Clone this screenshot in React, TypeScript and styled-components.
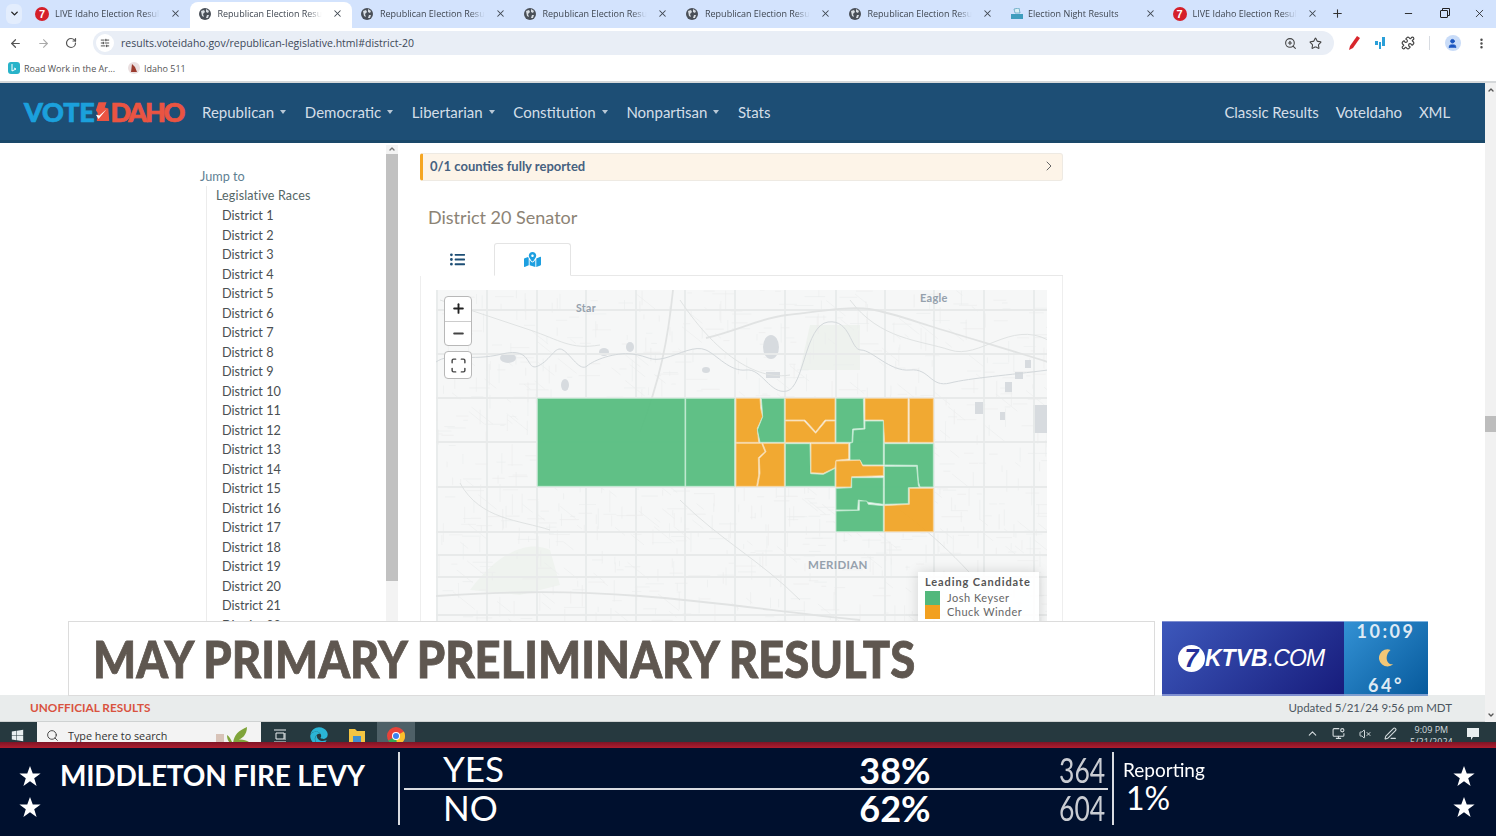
import styled, { createGlobalStyle } from 'styled-components'
import {
  ArrowLeft, ArrowRight, ChevronDown, ChevronRight, ChevronUp, Maximize, Minus, MoreVertical,
  PenLine, Plus, Puzzle, RotateCw, Search, SlidersHorizontal, Star, User, VolumeX, X, ZoomIn, MonitorDot,
} from 'lucide-react'
import { FaEdge, FaListUl, FaMapMarkedAlt, FaWindows } from 'react-icons/fa'

const GlobalStyle = createGlobalStyle`
  html, body { margin: 0; padding: 0; background: #fff; }
  * { box-sizing: border-box; }
  body { font-family: "Lato", "Open Sans", sans-serif; }
`

const tabs = [
  { icon: 'seven', title: 'LIVE Idaho Election Results' },
  { icon: 'globe', title: 'Republican Election Results', active: true },
  { icon: 'globe', title: 'Republican Election Results' },
  { icon: 'globe', title: 'Republican Election Results' },
  { icon: 'globe', title: 'Republican Election Results' },
  { icon: 'globe', title: 'Republican Election Results' },
  { icon: 'ballot', title: 'Election Night Results' },
  { icon: 'seven', title: 'LIVE Idaho Election Results' },
]

const parties = ['Republican', 'Democratic', 'Libertarian', 'Constitution', 'Nonpartisan']
const districts = Array.from({ length: 22 }, (_, i) => `District ${i + 1}`)

// precinct shapes traced from the map, coords are 3x from the (520,385) corner
const precincts: { fill: 'green' | 'orange'; points: string }[] = [
  { fill: 'green', points: '52,40 495,40 495,304 52,304' },
  { fill: 'green', points: '497,40 644,40 644,304 497,304' },
  { fill: 'orange', points: '648,40 720,40 722,70 728,95 712,130 716,172 648,172' },
  { fill: 'green', points: '724,40 793,40 793,172 720,172 712,135 728,95' },
  { fill: 'orange', points: '648,175 725,175 735,200 715,218 716,270 710,304 648,304' },
  { fill: 'orange', points: '728,175 793,175 793,304 713,304 720,265 718,220 738,200' },
  { fill: 'orange', points: '796,40 945,40 945,105 915,105 887,140 855,105 796,105' },
  { fill: 'orange', points: '796,108 852,108 887,145 918,108 945,108 945,172 796,172' },
  { fill: 'green', points: '948,40 1030,40 1032,130 998,132 996,172 948,172' },
  { fill: 'orange', points: '1035,40 1164,40 1164,172 1094,172 1090,105 1035,105' },
  { fill: 'orange', points: '1168,40 1240,40 1240,172 1168,172' },
  { fill: 'green', points: '1035,108 1090,108 1090,240 1028,240 1020,225 990,225 990,175 998,172 1000,135 1035,132' },
  { fill: 'green', points: '796,176 870,176 872,266 910,268 945,250 945,304 796,304' },
  { fill: 'orange', points: '873,176 986,176 986,222 948,226 945,248 910,265 873,263' },
  { fill: 'orange', points: '948,228 1020,226 1028,243 1090,243 1090,272 995,275 993,306 948,306' },
  { fill: 'green', points: '1093,176 1240,176 1240,306 1200,306 1195,290 1192,241 1093,240' },
  { fill: 'green', points: '1093,244 1190,244 1195,300 1198,307 1165,308 1165,356 1093,358' },
  { fill: 'green', points: '995,278 1090,278 1090,358 1045,352 1015,345 1013,375 948,375 948,310 995,308' },
  { fill: 'green', points: '948,378 1018,376 1018,348 1040,348 1045,358 1090,362 1090,440 948,440' },
  { fill: 'orange', points: '1093,362 1168,358 1168,310 1240,310 1240,440 1093,440' },
]

const gridX = [437, 487, 537, 586, 636, 685, 735, 785, 836, 885, 934, 984, 1034]
const gridY = [310, 354, 398, 442, 487, 532, 555, 577, 615]

// small neighbourhood streets, fixed seed so the map never changes
const streets = (() => {
  let seed = 20
  const next = () => {
    seed = (seed * 9301 + 49297) % 233280
    return seed / 233280
  }
  const out: string[] = []
  for (let i = 0; i < 1000; i++) {
    const x = 436 + next() * 612
    const y = 290 + next() * 340
    const len = 4 + next() * 18
    const dir = next()
    if (dir < 0.4) out.push(`M${x} ${y}h${len}`)
    else if (dir < 0.8) out.push(`M${x} ${y}v${len}`)
    else out.push(`M${x} ${y}l${len} ${len * 0.8}`)
  }
  return out.join('')
})()

const Frame = styled.div`
  position: relative;
  width: 1496px;
  height: 836px;
  overflow: hidden;
  display: flex;
  flex-direction: column;
  background: #fff;
`

const TabStrip = styled.div`
  height: 28px;
  background: #d3e3fd;
  display: flex;
  align-items: center;
  padding: 0 0 1px 6px;
`

const TabMenu = styled.div`
  width: 16px;
  height: 20px;
  margin-right: 5px;
  border-radius: 6px;
  background: #e3edfd;
  display: flex;
  align-items: center;
  justify-content: center;
  color: #222;
`

const Tab = styled.div<{ $active?: boolean }>`
  width: 162.5px;
  height: 26px;
  align-self: flex-end;
  margin-bottom: -1px;
  padding: 0 9px 3px 8px;
  display: flex;
  align-items: center;
  gap: 6px;
  border-radius: 8px 8px 0 0;
  background: ${p => (p.$active ? '#fff' : 'transparent')};
  font-family: "Open Sans", sans-serif;
  font-size: 9px;
  color: #3f4650;
`

const TabTitle = styled.span`
  flex: 1;
  white-space: nowrap;
  overflow: hidden;
  mask-image: linear-gradient(to right, #000 82%, transparent 96%);
`

const NewTab = styled.div`
  margin-left: 4px;
  color: #333;
  display: flex;
`

const WindowButtons = styled.div`
  margin-left: auto;
  width: 93px;
  padding-right: 10px;
  display: flex;
  align-items: center;
  justify-content: space-between;
  color: #222;
`

const SevenBadge = styled.span`
  width: 14px;
  height: 14px;
  flex: none;
  border-radius: 50%;
  background: #d5202a;
  color: #fff;
  font: bold 11px/14px "Liberation Sans", sans-serif;
  text-align: center;
`

const RestoreIcon = styled.span`
  width: 8px;
  height: 8px;
  border: 1px solid #222;
  border-radius: 1px;
  box-shadow: 2px -2px 0 -1px #d3e3fd, 2px -2px 0 0 #222;
`

const Toolbar = styled.div`
  height: 30px;
  background: #fff;
  display: flex;
  align-items: center;
  padding-left: 9px;
  color: #555;
`

const NavIcons = styled.div`
  width: 84px;
  display: flex;
  align-items: center;
  gap: 15px;
`

const Omnibox = styled.div`
  width: 1241px;
  height: 24px;
  border-radius: 12px;
  background: #e9eef6;
  display: flex;
  align-items: center;
  padding: 0 12px 0 3px;
  font-family: "Open Sans", sans-serif;
  font-size: 10.5px;
  color: #3c4858;
`

const TuneChip = styled.span`
  width: 18px;
  height: 18px;
  margin-right: 7px;
  border-radius: 50%;
  background: #fff;
  display: flex;
  align-items: center;
  justify-content: center;
  color: #333;
`

const OmniEnd = styled.div`
  margin-left: auto;
  display: flex;
  align-items: center;
  gap: 12px;
  color: #444;
`

const Extensions = styled.div`
  flex: 1;
  display: flex;
  align-items: center;
  justify-content: space-between;
  padding: 0 8px 0 14px;
  color: #444;
`

const ProfileDot = styled.span`
  width: 16px;
  height: 16px;
  border-radius: 50%;
  background: #c9dcf8;
  color: #1a55c0;
  display: flex;
  align-items: center;
  justify-content: center;
`

const ToolDivider = styled.span`
  width: 1px;
  height: 14px;
  background: #d8dce2;
`

const Bookmarks = styled.div`
  height: 25px;
  padding: 0 0 3px 8px;
  display: flex;
  align-items: center;
  gap: 13px;
  background: #fff;
  border-bottom: 2px solid #d5d8da;
  font-family: "Open Sans", sans-serif;
  font-size: 9px;
  color: #555;
`

const Bookmark = styled.span`
  display: flex;
  align-items: center;
  gap: 4px;
`

const Viewport = styled.div`
  height: 639px;
  display: flex;
`

const Page = styled.div`
  width: 1485px;
  display: flex;
  flex-direction: column;
`

const SiteHeader = styled.header`
  height: 60px;
  flex: none;
  padding: 0 35px 0 24px;
  display: flex;
  align-items: center;
  background: #1d4e75;
  border-bottom: 3px solid #1a4869;
`

const Logo = styled.div`
  width: 162px;
  margin-right: 16px;
  display: flex;
  align-items: center;
  font-family: "Lato", sans-serif;
  font-weight: 900;
  font-size: 27px;
  line-height: 27px;
  -webkit-text-stroke: 0.7px currentColor;
`

const LogoVote = styled.span`
  color: #1ba0dc;
  letter-spacing: -0.2px;
`

const LogoIdaho = styled.span`
  color: #ea5442;
  letter-spacing: -2.3px;
`

const NavLink = styled.a`
  display: flex;
  align-items: center;
  color: #d4dee8;
  font-size: 15px;
  margin-right: 18.7px;
`

const Caret = styled.span`
  margin-left: 6px;
  width: 0;
  height: 0;
  border: 3.5px solid transparent;
  border-top: 4px solid #b9c8d6;
  border-bottom: 0;
`

const HeaderEnd = styled.div`
  margin-left: auto;
  display: flex;
  letter-spacing: -0.1px;
  & > a { margin-right: 17px; }
  & > a:last-child { margin-right: 0; }
`

const Content = styled.div`
  flex: 1;
  min-height: 0;
  display: flex;
  overflow: hidden;
  background: #fff;
`

const Sidebar = styled.aside`
  width: 398px;
  flex: none;
  display: flex;
`

const JumpList = styled.div`
  flex: 1;
  padding: 24px 0 0 200px;
  overflow: hidden;
  line-height: 19.5px;
  font-size: 12.7px;
`

const JumpTitle = styled.div`
  color: #5f7f93;
`

const JumpGroup = styled.div`
  margin-left: 6px;
  border-left: 1px solid #ececec;
`

const GroupName = styled.div`
  padding-left: 9px;
  color: #566;
  font-size: 12.5px;
  letter-spacing: 0.15px;
  margin-top: -1px;
  margin-bottom: 1px;
`

const DistrictItem = styled.div`
  padding-left: 15px;
  color: #4a4f52;
`

const SideScroll = styled.div`
  width: 12px;
  margin-top: 2px;
  background: #f3f3f3;
  display: flex;
  flex-direction: column;
  align-items: center;
  color: #777;
`

const SideThumb = styled.div`
  width: 12px;
  height: 427px;
  margin-top: 1px;
  background: #c1c1c1;
`

const Main = styled.main`
  width: 643px;
  margin-left: 22px;
  padding-top: 10px;
`

const Alert = styled.div`
  height: 28px;
  padding: 0 5px 2px 7px;
  display: flex;
  align-items: center;
  justify-content: space-between;
  background: #fdf4e8;
  border: 1px solid #eeeae3;
  border-left: 3px solid #f5a623;
  border-radius: 3px;
  font-size: 13px;
  font-weight: 700;
  color: #466180;
`

const RaceTitle = styled.h2`
  margin: 25px 0 15px 8px;
  height: 22px;
  font-size: 18px;
  line-height: 22px;
  font-weight: 400;
  color: #8c8375;
`

const ViewTabs = styled.div`
  display: flex;
  height: 33px;
  border-bottom: 1px solid #e8e8e8;
`

const ViewTab = styled.div<{ $active?: boolean }>`
  height: 33px;
  width: ${p => (p.$active ? '77px' : '74px')};
  display: flex;
  align-items: center;
  justify-content: center;
  border: 1px solid ${p => (p.$active ? '#e4e4e4' : 'transparent')};
  border-bottom: 1px solid ${p => (p.$active ? '#fff' : 'transparent')};
  border-radius: 3px 3px 0 0;
  background: #fff;
  color: ${p => (p.$active ? '#1d9fe0' : '#1d4e75')};
`

const MapCard = styled.div`
  padding: 14px 15px;
  border: 1px solid #eeeeee;
  border-top: 0;
`

const MapBox = styled.div`
  position: relative;
  height: 340px;
  background: #f5f6f6;
  overflow: hidden;
`

const MapCanvas = styled.svg`
  display: block;
`

const MapLabel = styled.text`
  font-family: "Lato", sans-serif;
  font-weight: 700;
  fill: #95a1ad;
  letter-spacing: 0.3px;
`

const ZoomControl = styled.div`
  position: absolute;
  left: 8px;
  top: 6px;
  width: 28px;
  height: 50px;
  display: flex;
  flex-direction: column;
  background: #fff;
  border: 1px solid #b8b8b8;
  border-radius: 4px;
  color: #222;
`

const ZoomButton = styled.div`
  flex: 1;
  display: flex;
  align-items: center;
  justify-content: center;
  & + & { border-top: 1px solid #ccc; }
`

const FullscreenControl = styled.div`
  position: absolute;
  left: 8px;
  top: 61px;
  width: 28px;
  height: 28px;
  display: flex;
  align-items: center;
  justify-content: center;
  background: #fff;
  border: 1px solid #b8b8b8;
  border-radius: 4px;
  color: #444;
`

const Legend = styled.div`
  position: absolute;
  left: 482px;
  top: 282px;
  width: 121px;
  height: 60px;
  padding: 3px 7px;
  background: rgba(255, 255, 255, 0.9);
  box-shadow: 0 0 12px rgba(0, 0, 0, 0.15);
  font-size: 11px;
  line-height: 14px;
  color: #666;
`

const LegendTitle = styled.div`
  font-weight: 700;
  color: #555;
  margin-bottom: 2px;
  letter-spacing: 0.9px;
  white-space: nowrap;
`

const LegendRow = styled.div`
  display: flex;
  align-items: center;
  gap: 7px;
  letter-spacing: 0.5px;
`

const Swatch = styled.span<{ $color: string }>`
  width: 15px;
  height: 14px;
  background: ${p => p.$color};
`

const PageFooter = styled.footer`
  height: 27px;
  flex: none;
  padding: 0 33px 2px 30px;
  display: flex;
  align-items: center;
  justify-content: space-between;
  background: #e9ecec;
  border-bottom: 1px solid #cfd2d2;
  font-size: 11.5px;
  color: #4c5660;
`

const Unofficial = styled.span`
  color: #d9533f;
  font-weight: 700;
  font-size: 11.8px;
`

const PageScroll = styled.div`
  width: 11px;
  display: flex;
  flex-direction: column;
  align-items: center;
  justify-content: space-between;
  position: relative;
  background: #f1f1f1;
  color: #555;
  padding: 3px 0;
`

const PageThumb = styled.div`
  position: absolute;
  top: 333px;
  width: 11px;
  height: 16px;
  background: #bdbdbd;
`

const Taskbar = styled.div`
  height: 20px;
  flex: none;
  overflow: hidden;
  display: flex;
  background: #26393f;
  color: #e8eef0;
`

const StartButton = styled.div`
  width: 37px;
  display: flex;
  align-items: center;
  justify-content: center;
  padding: 7px 2px 0 0;
`

const TaskSearch = styled.div`
  width: 224px;
  height: 24px;
  padding: 2px 10px 0 9px;
  display: flex;
  align-items: center;
  gap: 9px;
  background: #f3f3f3;
  color: #333;
  font: 10.8px "Open Sans", sans-serif;
`

const SearchArt = styled.span`
  margin-left: auto;
  display: flex;
  color: #6d9a2c;
`

const TaskApp = styled.div<{ $open?: boolean }>`
  width: 38.5px;
  display: flex;
  align-items: center;
  justify-content: center;
  padding-top: 7px;
  background: ${p => (p.$open ? '#4e6067' : 'transparent')};
`

const Tray = styled.div`
  margin-left: auto;
  width: 190px;
  padding: 3px 16px 0 0;
  display: flex;
  align-items: center;
  justify-content: space-between;
  color: #d5dcdf;
`

const Clock = styled.div`
  font: 9px/12px "Open Sans", sans-serif;
  text-align: center;
  padding-top: 5px;
`

const RedRule = styled.div`
  height: 6px;
  flex: none;
  background: linear-gradient(to bottom, #7c1526, #b01c2e);
`

const Ticker = styled.div`
  flex: 1;
  display: flex;
  background: #00102e;
  color: #fff;
  padding-top: 4px;
`

const StarColumn = styled.div<{ $width: number }>`
  width: ${p => p.$width}px;
  height: 73px;
  flex: none;
  padding-top: 13px;
  display: flex;
  flex-direction: column;
  align-items: center;
  gap: 9px;
`

const RaceName = styled.div`
  width: 338px;
  flex: none;
  padding-top: 8px;
  font-weight: 700;
  font-size: 28px;
  line-height: 30px;
  letter-spacing: -0.2px;
`

const Results = styled.div`
  width: 716px;
  height: 73px;
  flex: none;
  padding: 0 4px;
  border-left: 2px solid #d8dbe0;
  border-right: 2px solid #d8dbe0;
`

const ResultRow = styled.div`
  height: 35.5px;
  display: grid;
  grid-template-columns: 407px 90px 1fr;
  align-items: center;
  padding: 0 3px 0 39px;
  & + & {
    height: 39px;
    border-top: 2px solid #d8dbe0;
  }
`

const Choice = styled.span`
  margin-top: -3px;
  font-size: 35px;
  line-height: 34px;
  font-weight: 400;
`

const Percent = styled.span`
  text-align: center;
  font-size: 36px;
  line-height: 34px;
  font-weight: 700;
`

const VoteCount = styled.span`
  justify-self: end;
  font-size: 34px;
  line-height: 34px;
  color: #c9ccd2;
  transform-origin: right;
  transform: scaleX(0.78);
`

const Reporting = styled.div`
  flex: 1;
  padding: 5px 0 0 9px;
`

const ReportingLabel = styled.div`
  font-size: 20px;
  line-height: 24px;
  transform-origin: left;
  transform: scaleX(0.95);
`

const ReportingValue = styled.div`
  font-size: 32px;
  line-height: 34px;
  padding-left: 3px;
`

const LowerThird = styled.div`
  position: absolute;
  left: 68px;
  top: 621px;
  width: 1360px;
  height: 75px;
  display: flex;
  gap: 7px;
`

const Headline = styled.div`
  width: 1087px;
  padding-left: 24px;
  display: flex;
  align-items: center;
  background: #fff;
  border: 1px solid #dcdcdc;
  overflow: hidden;
`

const HeadlineText = styled.span`
  font-weight: 900;
  font-size: 51px;
  line-height: 60px;
  -webkit-text-stroke: 0.8px #5f5750;
  color: #5f5750;
  white-space: nowrap;
  transform-origin: left;
  transform: scaleX(0.89);
`

const StationBug = styled.div`
  flex: 1;
  display: flex;
`

const StationBrand = styled.div`
  width: 182px;
  padding-left: 16px;
  display: flex;
  align-items: center;
  background: linear-gradient(135deg, #3d58bb, #171c7c);
  border-top: 1px solid #7f8fd0;
  border-bottom: 2px solid #7f8fd0;
  font-family: "Liberation Sans", sans-serif;
  font-style: italic;
  color: #fff;
`

const BrandSeven = styled.span`
  width: 27px;
  height: 27px;
  border-radius: 50%;
  background: #fff;
  color: #26309a;
  font-weight: 700;
  font-size: 25px;
  line-height: 27px;
  text-align: center;
`

const BrandName = styled.span`
  font-weight: 700;
  font-size: 23px;
`

const BrandDomain = styled.span`
  font-size: 23px;
  letter-spacing: -0.8px;
`

const WeatherPanel = styled.div`
  flex: 1;
  display: flex;
  flex-direction: column;
  align-items: center;
  justify-content: space-between;
  background: linear-gradient(135deg, #3391d4, #075a9c);
  border-top: 1px solid #7fb4e0;
  border-bottom: 2px solid #7f9fd0;
  font-family: "Lato", sans-serif;
  font-weight: 700;
  font-size: 18px;
  line-height: 18px;
  letter-spacing: 2.5px;
  color: #dfeaf4;
`

const Globe = () => (
  <svg width="14" height="12" viewBox="0 0 14 12" style={{ flex: 'none' }}>
    <circle cx="7" cy="6" r="6" fill="#4a5058" />
    <path d="M3 3l3-1 1 2-2 2 1 3-2-1zM8 1l3 2-1 2-2-1zM9 7l2 0-1 3-2 0z" fill="#d8dde2" />
  </svg>
)

const Ballot = () => (
  <svg width="14" height="12" viewBox="0 0 14 12" style={{ flex: 'none', marginRight: -2 }}>
    <path d="M4 1l5-1 1 5H5z" fill="#d9f0f5" stroke="#3c8fae" strokeWidth=".6" />
    <path d="M1 6h12v5H1z" fill="#3f9dbd" />
  </svg>
)

const TabIcon = ({ kind }: { kind: string }) => {
  if (kind === 'seven') return <SevenBadge>7</SevenBadge>
  if (kind === 'ballot') return <Ballot />
  return <Globe />
}

const TickerStar = () => (
  <svg width="22" height="22" viewBox="0 0 24 24">
    <path d="M12 1l3 8.200h8.600l-7 5.200 2.600 8.400L12 17.600l-7.200 5.200 2.600-8.400-7-5.200H9z" fill="#fff" />
  </svg>
)

const MapBackdrop = () => (
  <>
    <rect x="436" y="290" width="612" height="340" fill="#f6f7f7" />
    <path d="M810 325h50v45h-60z" fill="#eef2ee" />
    <path d="M470 590c30-40 60-50 80-40l10 35-40 10z" fill="#eff3ef" />
    <path d={streets} stroke="#ebecec" strokeWidth=".6" fill="none" />
    <g fill="#d7dbdf">
      <ellipse cx="771" cy="347" rx="8" ry="12" />
      <rect x="766" y="372" width="14" height="6" />
      <ellipse cx="508" cy="358" rx="8" ry="5" />
      <ellipse cx="565" cy="385" rx="4" ry="6" />
      <ellipse cx="604" cy="352" rx="5" ry="4" />
      <ellipse cx="630" cy="347" rx="4" ry="5" />
      <ellipse cx="706" cy="370" rx="4" ry="3" />
      <rect x="1033" y="405" width="14" height="28" />
      <rect x="975" y="402" width="8" height="12" />
      <rect x="1005" y="382" width="7" height="10" />
      <rect x="1015" y="372" width="8" height="7" />
      <rect x="1000" y="412" width="5" height="8" />
      <rect x="1025" y="360" width="6" height="8" />
    </g>
    <g strokeWidth="1.8" fill="none">
      {gridX.map(x => <path key={x} d={`M${x} 290V630`} stroke="#e8eaea" />)}
      {gridY.map(y => <path key={y} d={`M436 ${y}H1048`} stroke="#e8eaea" />)}
      <path d="M706 338C740 330 760 318 787 315S850 306 869 309 905 318 930 326 1010 350 1048 362" stroke="#e1e3e3" />
      <path d="M673 290C668 340 660 380 640 432" stroke="#e1e3e3" />
      <path d="M436 596C500 592 560 590 640 596S780 612 860 620" stroke="#e1e3e3" />
    </g>
    <path
      d="M436 362C450 352 470 362 502 354S525 372 538 366 555 345 563 350 580 372 587 366 615 352 632 354 650 362 665 358 695 345 706 350 730 372 746 370 770 395 787 391 805 325 828 322 850 350 861 350 890 372 910 370 930 388 950 383 1010 375 1048 370"
      stroke="#d3d8db"
      strokeWidth="1"
      fill="none"
    />
    <path
      d="M440 300C470 310 500 320 530 330S570 350 600 345M680 300C720 360 760 380 790 375M850 300C880 340 920 340 950 350S1010 320 1048 340M460 483C480 520 520 520 550 530M680 500C720 540 760 560 800 600M900 510C940 540 970 570 1010 620"
      stroke="#e0e3e3"
      strokeWidth="1"
      fill="none"
    />
  </>
)

const ElectionMap = () => (
  <MapCanvas width="612" height="340" viewBox="436 290 612 340">
    <MapBackdrop />
    <g transform="translate(520 385) scale(.33333)">
      {precincts.map(p => (
        <polygon
          key={p.points}
          points={p.points}
          fill={p.fill === 'green' ? '#5abd81' : '#f0a62a'}
          fillOpacity=".96"
          stroke={p.fill === 'green' ? '#c4ecd4' : '#f9d9a4'}
          strokeWidth="2.5"
        />
      ))}
    </g>
    <MapLabel x="576" y="312" fontSize="10.5">Star</MapLabel>
    <MapLabel x="920" y="302" fontSize="11">Eagle</MapLabel>
    <MapLabel x="808" y="569" fontSize="11.5">MERIDIAN</MapLabel>
  </MapCanvas>
)

const App = () => (
  <Frame>
    <GlobalStyle />
    <TabStrip>
      <TabMenu><ChevronDown size={11} strokeWidth={3} /></TabMenu>
      {tabs.map((t, i) => (
        <Tab key={i} $active={t.active}>
          <TabIcon kind={t.icon} />
          <TabTitle>{t.title}</TabTitle>
          <X size={11} strokeWidth={2.2} />
        </Tab>
      ))}
      <NewTab><Plus size={13} strokeWidth={2} /></NewTab>
      <WindowButtons>
        <Minus size={11} />
        <RestoreIcon />
        <X size={13} strokeWidth={1.5} />
      </WindowButtons>
    </TabStrip>

    <Toolbar>
      <NavIcons>
        <ArrowLeft size={13} strokeWidth={2.2} />
        <ArrowRight size={13} strokeWidth={2} color="#aaa" />
        <RotateCw size={12} strokeWidth={2.4} />
      </NavIcons>
      <Omnibox>
        <TuneChip><SlidersHorizontal size={10} /></TuneChip>
        results.voteidaho.gov/republican-legislative.html#district-20
        <OmniEnd>
          <ZoomIn size={13} />
          <Star size={13} strokeWidth={2} />
        </OmniEnd>
      </Omnibox>
      <Extensions>
        <svg width="12" height="14" viewBox="0 0 12 14">
          <path d="M9 0l3 2-7 10-4 2 1-4z" fill="#d8262c" />
        </svg>
        <svg width="12" height="14" viewBox="0 0 12 14">
          <path d="M1 5h3v4H1zM5 6h2v7H5zM8 1h3v9H8z" fill="#2a9fd8" />
        </svg>
        <Puzzle size={14} />
        <ToolDivider />
        <ProfileDot><User size={11} fill="#1a55c0" /></ProfileDot>
        <MoreVertical size={13} strokeWidth={2.5} />
      </Extensions>
    </Toolbar>

    <Bookmarks>
      <Bookmark>
        <svg width="12" height="12" viewBox="0 0 12 12">
          <rect width="12" height="12" rx="3" fill="#28b3c9" />
          <path d="M4 2v7l4-2-2-1" stroke="#fff" fill="none" />
        </svg>
        Road Work in the Ar...
      </Bookmark>
      <Bookmark>
        <svg width="12" height="12" viewBox="0 0 12 12">
          <circle cx="6" cy="6" r="6" fill="#eadfe0" />
          <path d="M4 2l3 3 2 5H3z" fill="#9b3b2e" />
        </svg>
        Idaho 511
      </Bookmark>
    </Bookmarks>

    <Viewport>
      <Page>
        <SiteHeader>
          <Logo>
            <LogoVote>VOTE</LogoVote>
            <svg width="16" height="22" viewBox="0 0 18 22" style={{ flex: 'none' }}>
              <path d="M4 0h9l-2 6 4 1 1 14H2l1-9-2-3z" fill="#ea5442" />
              <path d="M1 14l3 5 9-11-8 7z" fill="#fff" />
            </svg>
            <LogoIdaho>DAHO</LogoIdaho>
          </Logo>
          {parties.map(name => (
            <NavLink key={name}>{name}<Caret /></NavLink>
          ))}
          <NavLink>Stats</NavLink>
          <HeaderEnd>
            <NavLink>Classic Results</NavLink>
            <NavLink>VoteIdaho</NavLink>
            <NavLink>XML</NavLink>
          </HeaderEnd>
        </SiteHeader>

        <Content>
          <Sidebar>
            <JumpList>
              <JumpTitle>Jump to</JumpTitle>
              <JumpGroup>
                <GroupName>Legislative Races</GroupName>
                {districts.map(d => <DistrictItem key={d}>{d}</DistrictItem>)}
              </JumpGroup>
            </JumpList>
            <SideScroll>
              <ChevronUp size={8} strokeWidth={4} />
              <SideThumb />
            </SideScroll>
          </Sidebar>

          <Main>
            <Alert>
              0/1 counties fully reported
              <ChevronRight size={16} color="#666" strokeWidth={1.5} />
            </Alert>
            <RaceTitle>District 20 Senator</RaceTitle>
            <ViewTabs>
              <ViewTab><FaListUl size={15} /></ViewTab>
              <ViewTab $active><FaMapMarkedAlt size={17} /></ViewTab>
            </ViewTabs>
            <MapCard>
              <MapBox>
                <ElectionMap />
                <ZoomControl>
                  <ZoomButton><Plus size={15} strokeWidth={3} /></ZoomButton>
                  <ZoomButton><Minus size={15} strokeWidth={3} color="#444" /></ZoomButton>
                </ZoomControl>
                <FullscreenControl><Maximize size={17} strokeWidth={2} /></FullscreenControl>
                <Legend>
                  <LegendTitle>Leading Candidate</LegendTitle>
                  <LegendRow><Swatch $color="#52b87c" />Josh Keyser</LegendRow>
                  <LegendRow><Swatch $color="#f2a01f" />Chuck Winder</LegendRow>
                </Legend>
              </MapBox>
            </MapCard>
          </Main>
        </Content>

        <PageFooter>
          <Unofficial>UNOFFICIAL RESULTS</Unofficial>
          <span>Updated 5/21/24 9:56 pm MDT</span>
        </PageFooter>
      </Page>
      <PageScroll>
        <ChevronUp size={8} strokeWidth={4} />
        <PageThumb />
        <ChevronDown size={8} strokeWidth={4} />
      </PageScroll>
    </Viewport>

    <Taskbar>
      <StartButton><FaWindows size={13} /></StartButton>
      <TaskSearch>
        <Search size={13} strokeWidth={1.6} />
        Type here to search
        <SearchArt>
          <svg width="36" height="20" viewBox="0 0 36 20">
            <rect x="1" y="9" width="8" height="11" fill="#d8c3b8" />
            <path d="M18 20C18 12 22 6 32 2c0 8-5 12-10 13 4-1 9 0 12 2-5 2-10 2-14 3zM18 20c-1-4-3-8-6-10 0 5 2 8 6 10z" fill="#7fa43a" />
          </svg>
        </SearchArt>
      </TaskSearch>
      <TaskApp>
        <svg width="14" height="14" viewBox="0 0 14 14">
          <path d="M1 1h12M1 13h12M3 4h8v6H3zM12 4v7" stroke="#e8eef0" strokeWidth="1" fill="none" />
        </svg>
      </TaskApp>
      <TaskApp><FaEdge size={18} color="#2bb5d6" /></TaskApp>
      <TaskApp>
        <svg width="18" height="15" viewBox="0 0 18 15">
          <path d="M1 1h6l2 2h8v12H1z" fill="#f4c542" />
          <rect x="5" y="8" width="8" height="7" fill="#3f8fd0" />
        </svg>
      </TaskApp>
      <TaskApp $open>
        <svg width="18" height="18" viewBox="0 0 18 18">
          <circle cx="9" cy="9" r="9" fill="#e8433a" />
          <path d="M9 9L1.200 13.500A9 9 0 0 0 13 17z" fill="#34a853" />
          <path d="M9 9l7.800 -4.500A9 9 0 0 1 10 18z" fill="#fbc02d" />
          <circle cx="9" cy="9" r="4" fill="#fff" />
          <circle cx="9" cy="9" r="3" fill="#3b82f0" />
        </svg>
      </TaskApp>
      <Tray>
        <ChevronUp size={13} />
        <MonitorDot size={13} />
        <VolumeX size={12} />
        <PenLine size={13} />
        <Clock>9:09 PM<br />5/21/2024</Clock>
        <svg width="14" height="13" viewBox="0 0 14 13">
          <path d="M1 1h12v9H7l-2 3v-3H1z" fill="#e8eef0" />
        </svg>
      </Tray>
    </Taskbar>
    <RedRule />

    <Ticker>
      <StarColumn $width={60}>
        <TickerStar />
        <TickerStar />
      </StarColumn>
      <RaceName>MIDDLETON FIRE LEVY</RaceName>
      <Results>
        <ResultRow>
          <Choice>YES</Choice>
          <Percent>38%</Percent>
          <VoteCount>364</VoteCount>
        </ResultRow>
        <ResultRow>
          <Choice>NO</Choice>
          <Percent>62%</Percent>
          <VoteCount>604</VoteCount>
        </ResultRow>
      </Results>
      <Reporting>
        <ReportingLabel>Reporting</ReportingLabel>
        <ReportingValue>1%</ReportingValue>
      </Reporting>
      <StarColumn $width={64}>
        <TickerStar />
        <TickerStar />
      </StarColumn>
    </Ticker>

    <LowerThird>
      <Headline>
        <HeadlineText>MAY PRIMARY PRELIMINARY RESULTS</HeadlineText>
      </Headline>
      <StationBug>
        <StationBrand>
          <BrandSeven>7</BrandSeven>
          <BrandName>KTVB</BrandName>
          <BrandDomain>.COM</BrandDomain>
        </StationBrand>
        <WeatherPanel>
          <span>10:09</span>
          <svg width="18" height="18" viewBox="0 0 20 20">
            <path d="M15 1A9.500 9.500 0 1 0 18 17C10 18 8 7 15 1z" fill="#f2c777" />
          </svg>
          <span>64°</span>
        </WeatherPanel>
      </StationBug>
    </LowerThird>
  </Frame>
)

export default App
